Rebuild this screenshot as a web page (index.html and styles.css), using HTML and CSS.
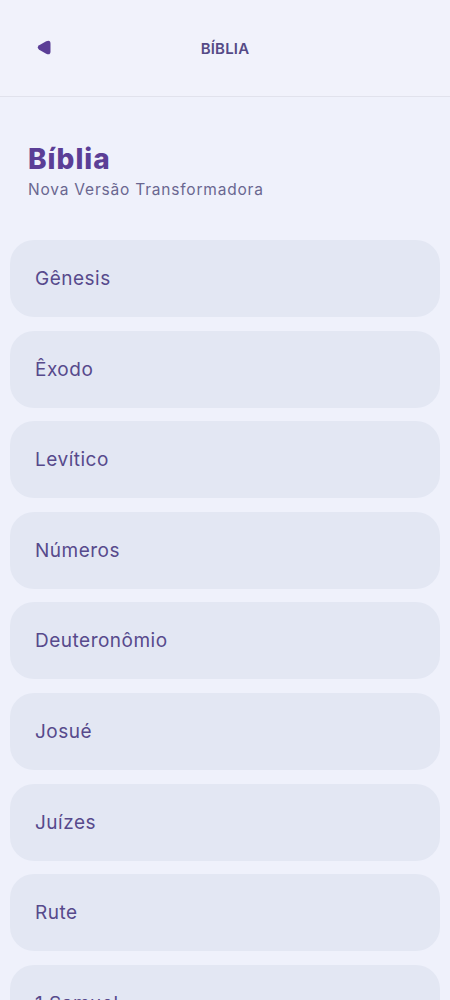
FILE: index.html
```html
<!DOCTYPE html>
<html lang="pt-BR">
<head>
    <meta charset="UTF-8">
    <meta name="viewport" content="width=device-width, initial-scale=1.0">
    <title>Bíblia</title>
    <link rel="stylesheet" href="styles.css">
</head>
<body>
    <header class="top-bar">
        <button class="back-btn" aria-label="Voltar">
            <svg width="15" height="15" viewBox="0 0 14 14">
                <path d="M2 5 L8.6 1.2 Q12.6 -0.6 12.6 3.6 L12.6 10.4 Q12.6 14.6 8.6 12.8 L2 9 Q-0.6 7 2 5 Z" fill="#5b3e96"/>
            </svg>
        </button>
        <span class="top-title">BÍBLIA</span>
    </header>

    <div class="intro">
        <h1>Bíblia</h1>
        <p>Nova Versão Transformadora</p>
    </div>

    <ul class="books">
        <li class="book">Gênesis</li>
        <li class="book">Êxodo</li>
        <li class="book">Levítico</li>
        <li class="book">Números</li>
        <li class="book">Deuteronômio</li>
        <li class="book">Josué</li>
        <li class="book">Juízes</li>
        <li class="book">Rute</li>
        <li class="book">1 Samuel</li>
        <li class="book">2 Samuel</li>
    </ul>
</body>
</html>
```

FILE: styles.css
```css
body {
    margin: 0;
    padding: 0;
    background-color: #eff1fb;
    font-family: Inter, "Noto Sans", sans-serif;
    color: #574a8c;
    overflow: hidden;
}
.top-bar {
    position: relative;
    height: 96px;
    display: flex;
    align-items: center;
    justify-content: center;
    border-bottom: 1px solid #e1e2ec;
    background-color: #f1f2fb;
}
.back-btn {
    position: absolute;
    left: 37px;
    top: 40px;
    width: 15px;
    height: 15px;
    padding: 0;
    border: none;
    background: none;
    display: flex;
}
.top-title {
    font-size: 15px;
    font-weight: 600;
    color: #554a86;
    letter-spacing: 0.2px;
}
.intro {
    padding: 45px 28px 0;
}
.intro h1 {
    margin: 0;
    font-size: 28px;
    font-weight: 800;
    color: #5b3e96;
    line-height: 34px;
    letter-spacing: 1px;
}
.intro p {
    margin: 3px 0 0;
    font-size: 15.5px;
    color: #6a6790;
    line-height: 22px;
    letter-spacing: 0.8px;
}
.books {
    list-style: none;
    margin: 0;
    padding: 39px 10px 0;
    display: flex;
    flex-direction: column;
    gap: 13.6px;
}
.book {
    height: 77px;
    flex-shrink: 0;
    display: flex;
    align-items: center;
    padding: 0 25px;
    border-radius: 24px;
    background-color: #e3e7f3;
    font-size: 19px;
    font-weight: 400;
    color: #574a8c;
    letter-spacing: 0.5px;
}
```
